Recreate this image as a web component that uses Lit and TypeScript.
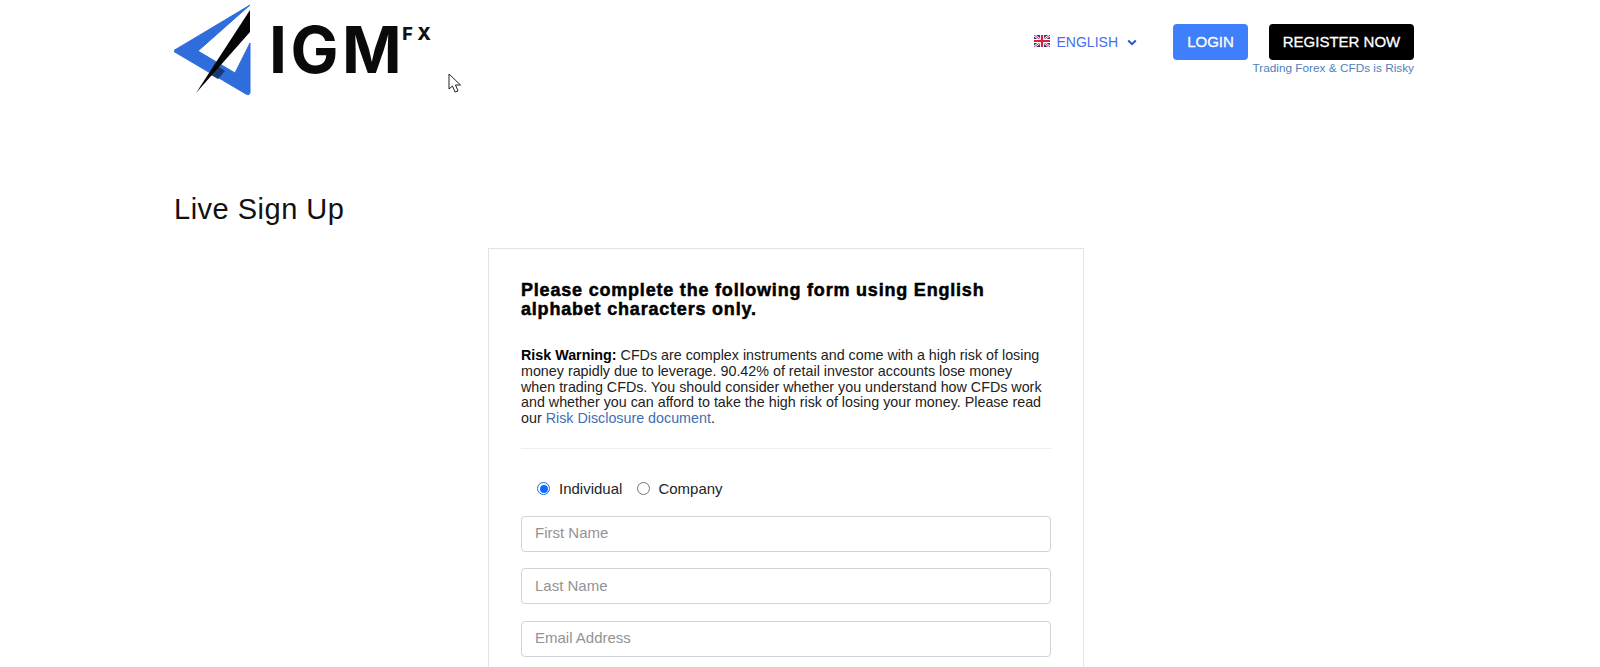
import { LitElement, html, css } from "lit";
import { customElement } from "lit/decorators.js";

@customElement("app-root")
export class AppRoot extends LitElement {
  static styles = css`
    :host { display: block; height: 667px; overflow: hidden; position: relative; background: #fff; color: #000; font-family: "Liberation Sans", Arial, sans-serif; }
    * { box-sizing: border-box; }
    .page { width: 1240px; margin-left: 174px; }
    .header { height: 117px; display: flex; justify-content: space-between; align-items: flex-start; }
    .brand { display: flex; align-items: flex-start; padding-top: 3px; }
    .mark { width: 92px; height: 96px; display: block; }
    .igm { font-family: "Inter", "Liberation Sans", sans-serif; font-weight: 700; font-size: 64px; line-height: 64px; margin-left: 3px; margin-top: 15px; letter-spacing: 3.5px; color: #0a0a0a; }
    .fx { font-family: "Inter", "Liberation Sans", sans-serif; font-weight: 800; font-size: 18px; line-height: 18px; letter-spacing: 4.5px; margin-left: -3px; margin-top: 22px; color: #111; }
    .actions { display: flex; flex-direction: column; align-items: flex-end; padding-top: 24px; }
    .row { display: flex; align-items: center; }
    .lang { display: flex; align-items: center; color: #4a6cf0; font-size: 14px; margin-right: 36px; }
    .flag { width: 16px; height: 12px; margin-right: 7px; margin-top: -3px; display: block; }
    .chev { width: 10px; height: 7px; margin-left: 9px; display: block; }
    .btn { height: 36px; border-radius: 4px; color: #fff; font-size: 15px; padding-bottom: 2px; display: flex; align-items: center; justify-content: center; -webkit-text-stroke: 0.3px #fff; }
    .login { width: 75px; background: #3f7ffb; margin-right: 21px; }
    .register { width: 145px; background: #000; }
    .risky { font-size: 11.8px; line-height: 14px; color: #4f81bd; margin-top: 1px; }
    h1 { font-weight: 400; font-size: 29px; line-height: 34px; margin: 75px 0 0; letter-spacing: 0.5px; color: #111; }
    .card { width: 596px; margin: 22px 0 0 314px; border: 1px solid #e3e3e3; padding: 32px 32px; min-height: 500px; }
    h2 { font-size: 18px; line-height: 19px; font-weight: 700; margin: 0; letter-spacing: 0.8px; width: 490px; -webkit-text-stroke: 0.5px #000; }
    .warn { font-size: 14.3px; line-height: 15.8px; margin: 29px 0 0; color: #222; width: 524px; }
    .warn b { color: #000; }
    .warn a { color: #3d6fb4; text-decoration: none; }
    hr { border: 0; border-top: 1px solid #eee; margin: 21px 0 0; }
    .types { display: flex; align-items: center; margin: 24px 0 0 16px; font-size: 15px; height: 31px; color: #212529; }
    .radio { width: 13px; height: 13px; border-radius: 50%; border: 1px solid #767676; margin-right: 9px; background: #fff; flex: none; }
    .radio.on { border: 1.5px solid #0d6efd; padding: 1.5px; background: #0d6efd content-box; }
    .types span { margin-right: 15px; }
    .radio:not(.on) { margin-right: 8px; }
    .field { display: flex; align-items: center; width: 530px; height: 36px; border: 1px solid #ced4da; border-radius: 4px; padding: 0 13px 2px; color: #939393; font-size: 15px; margin-bottom: 16.5px; }
    .types + .field { margin-top: 12px; }
    .cursor { position: absolute; left: 448px; top: 73px; width: 15px; height: 22px; }
  `;

  render() {
    return html`
      <div class="page">
        <div class="header">
          <div class="brand">
            <svg class="mark" viewBox="0 0 92 96">
              <path d="M-1 48 L76 2 L24 48 L61 70 L76 40 L76 89 Q76 93 72 91 Z" fill="#2f6ddc" stroke="#2f6ddc" stroke-width="1" stroke-linejoin="round"/>
              <path d="M42 62 L51 68 L44 76 L37 72 Z" fill="#1c3a70"/>
              <path d="M76 7 L76 29 L22 90 Z" fill="#050505"/>
            </svg>
            <span class="igm">IGM</span><span class="fx">FX</span>
          </div>
          <div class="actions">
            <div class="row">
              <div class="lang">
                <svg class="flag" viewBox="0 0 16 12">
                  <rect width="16" height="12" fill="#2b3f87"/>
                  <path d="M0 0L16 12M16 0L0 12" stroke="#fff" stroke-width="2.4"/>
                  <path d="M0 0L16 12M16 0L0 12" stroke="#d8213a" stroke-width="0.9"/>
                  <path d="M8 0V12M0 6H16" stroke="#fff" stroke-width="4"/>
                  <path d="M8 0V12M0 6H16" stroke="#d8213a" stroke-width="2.2"/>
                </svg>
                <span>ENGLISH</span>
                <svg class="chev" viewBox="0 0 10 7"><path d="M1.2 1.5L5 5.2L8.8 1.5" fill="none" stroke="#2a55c8" stroke-width="2"/></svg>
              </div>
              <div class="btn login">LOGIN</div>
              <div class="btn register">REGISTER NOW</div>
            </div>
            <div class="risky">Trading Forex &amp; CFDs is Risky</div>
          </div>
        </div>
        <h1>Live Sign Up</h1>
        <div class="card">
          <h2>Please complete the following form using English alphabet characters only.</h2>
          <p class="warn"><b>Risk Warning:</b> CFDs are complex instruments and come with a high risk of losing money rapidly due to leverage. 90.42% of retail investor accounts lose money when trading CFDs. You should consider whether you understand how CFDs work and whether you can afford to take the high risk of losing your money. Please read our <a>Risk Disclosure document</a>.</p>
          <hr />
          <div class="types">
            <div class="radio on"></div><span>Individual</span>
            <div class="radio"></div><span>Company</span>
          </div>
          <div class="field">First Name</div>
          <div class="field">Last Name</div>
          <div class="field">Email Address</div>
        </div>
      </div>
      <svg class="cursor" viewBox="0 0 15 22">
        <path d="M1 1 L1 16 L4.5 13 L7 19 L10 18 L7.5 12 L12.5 12 Z" fill="#fff" stroke="#222" stroke-width="1"/>
      </svg>
    `;
  }
}
